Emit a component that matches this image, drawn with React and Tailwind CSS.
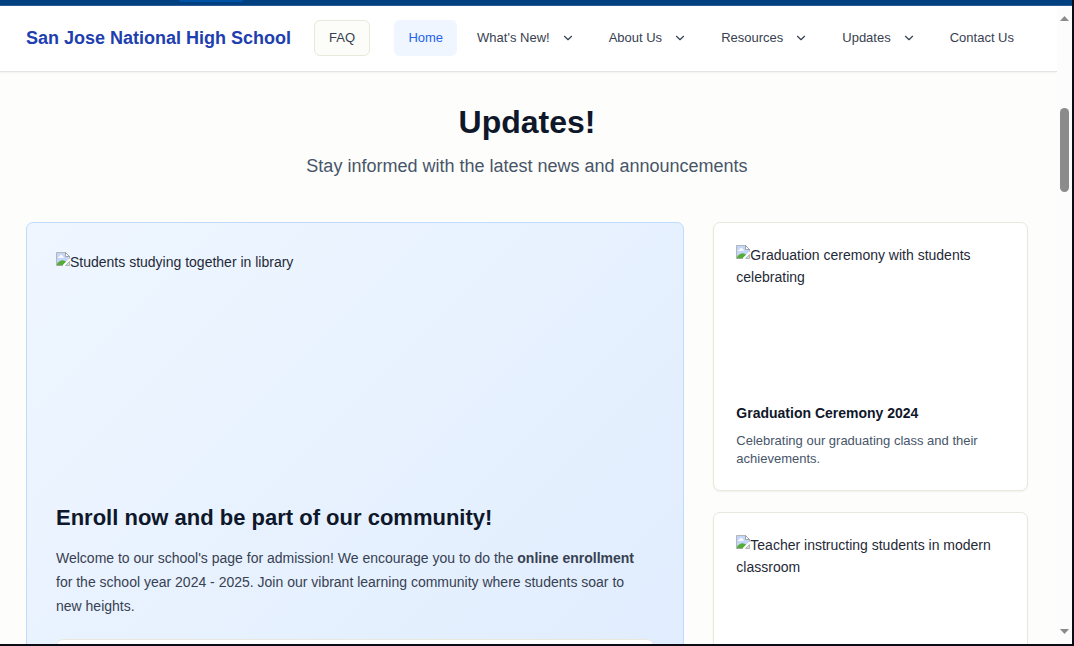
import { ChevronDown } from "lucide-react";

const NAV = [
  { label: "Home", active: true },
  { label: "What's New!", menu: true },
  { label: "About Us", menu: true },
  { label: "Resources", menu: true },
  { label: "Updates", menu: true },
  { label: "Contact Us" },
];

const STORIES = [
  {
    alt: "Graduation ceremony with students celebrating",
    title: "Graduation Ceremony 2024",
    text: "Celebrating our graduating class and their achievements.",
  },
  { alt: "Teacher instructing students in modern classroom" },
];

function MissingPicture() {
  return (
    <svg className="mt-px inline-block h-3.5 w-3.5 align-top" viewBox="0 0 14 14" aria-hidden="true">
      <path d="M.5 .5H9.5L13.5 4.5V7L7 13.5H.5Z" fill="#c3d5f8" />
      <path d="M2 6Q2 4.2 3.6 4.2Q4.4 2.2 6 3.2Q7.8 3.6 7.8 6Z" fill="#f6f9ff" />
      <path d="M1 13V12Q3.5 8.3 6.5 8.3Q8.8 8.3 10.2 9.8L7 13Z" fill="#55ac36" />
      <path d="M.5 13.5V.5H9.5L13.5 4.5V7" fill="none" stroke="#b3b6bb" />
      <path d="M9.5 .5V4.5H13.5Z" fill="#fff" stroke="#8e9299" strokeWidth=".8" />
      <path d="M.5 13.5H7" stroke="#9aa79a" />
      <path d="M13.5 9.5V13.5H9.5Z" fill="#cfe0ca" stroke="#a3a7ad" strokeWidth=".8" />
      <path d="M14 7L7.2 13.8" stroke="#fff" strokeWidth="1.5" />
    </svg>
  );
}

function Picture({ alt, className }) {
  return (
    <div className={className}>
      <MissingPicture />
      {alt}
    </div>
  );
}

function Header() {
  return (
    <header className="flex shrink-0 items-center justify-between border-b border-[#e3e4e6] bg-white pt-3.5 pr-[29px] pb-[15px] pl-[26px] shadow-xs">
      <div className="flex items-center gap-[23px] whitespace-nowrap">
        <a href="#home" className="text-[18px] font-bold text-[#1e40af]">San Jose National High School</a>
        <button type="button" className="h-9 rounded-md border border-[#e8e8dd] bg-[#fcfcf8] px-3.5 text-[13px] text-[#374151]">FAQ</button>
      </div>
      <nav className="flex items-center gap-1.5 whitespace-nowrap text-[13px] text-[#374151]">
        {NAV.map(({ label, active, menu }) =>
          menu ? (
            <button key={label} type="button" className="flex h-9 items-center gap-[11px] rounded-md px-3.5">
              {label}
              <ChevronDown className="h-3.5 w-3.5" aria-hidden="true" />
            </button>
          ) : (
            <a
              key={label}
              href={"#" + label.toLowerCase().replace(" ", "-")}
              className={active ? "flex h-9 items-center rounded-md bg-[#eff6ff] px-3.5 text-[#2563eb]" : "flex h-9 items-center rounded-md px-3.5"}
            >
              {label}
            </a>
          )
        )}
      </nav>
    </header>
  );
}

function ScrollRail() {
  return (
    <div className="flex w-[15px] shrink-0 flex-col items-center bg-[#fcfcfc] pt-2.5 pb-2.5" aria-hidden="true">
      <svg className="h-[5px] w-[9px]" viewBox="0 0 9 5"><path d="M4.5 0L9 5H0Z" fill="#8a8a8a" /></svg>
      <div className="mt-[87px] h-[84px] w-[9px] rounded-full bg-[#8b8b8b]" />
      <svg className="mt-auto h-[5px] w-[9px]" viewBox="0 0 9 5"><path d="M0 0H9L4.5 5Z" fill="#8a8a8a" /></svg>
    </div>
  );
}

export default function App() {
  return (
    <div className="flex h-screen flex-col overflow-hidden border-r-2 border-b-2 border-[#0c0c16] bg-[#fdfdfb] font-['Liberation_Sans',Arial,sans-serif]">
      <div className="h-1.5 shrink-0 border-b border-[#2b5c93] bg-[#004080] pl-[179px]">
        <div className="h-0.5 w-16 rounded-b-sm bg-[#0052a5]" />
      </div>
      <div className="flex min-h-0 grow">
        <div className="flex min-w-0 grow flex-col">
          <Header />
          <main className="min-h-0 grow overflow-hidden pt-[30px] pr-[29px] pl-[26px]">
            <div className="text-center">
              <h1 className="text-[32px] leading-10 font-bold text-[#0f172a]">Updates!</h1>
              <p className="mt-2.5 text-[18px] leading-7 text-[#475569]">Stay informed with the latest news and announcements</p>
            </div>
            <div className="mt-[42px] grid grid-cols-3 gap-[29px]">
              <article className="col-span-2 rounded-[7px] border border-[#bfdbfe] bg-linear-135 from-[#eff6ff] to-[#dbeafe] p-[29px] pt-7">
                <Picture alt="Students studying together in library" className="h-[232px] text-[14px] leading-[22px] text-[#1f2937]" />
                <h2 className="mt-5 text-[22px] leading-[30px] font-bold text-[#0f172a]">Enroll now and be part of our community!</h2>
                <p className="mt-[13px] pr-2 text-[14px] leading-6 text-[#374151]">
                  Welcome to our school's page for admission! We encourage you to do the <strong>online enrollment</strong> for
                  the school year 2024 - 2025. Join our vibrant learning community where students soar to new heights.
                </p>
                <div className="mt-[21px] h-96 rounded-[7px] border border-[#e8e8dd] bg-white" />
              </article>
              <div className="flex flex-col gap-[21px]">
                {STORIES.map((s) => (
                  <article key={s.alt} className="rounded-[7px] border border-[#e8e8dd] bg-white p-[22px] pt-[21px] shadow-xs">
                    <Picture alt={s.alt} className="h-[145px] text-[14px] leading-[22px] text-[#1f2937]" />
                    {s.title && <h3 className="mt-3.5 text-[14px] leading-5 font-bold text-[#0f172a]">{s.title}</h3>}
                    {s.text && <p className="mt-[9px] text-[13px] leading-[18px] text-[#475569]">{s.text}</p>}
                  </article>
                ))}
              </div>
            </div>
          </main>
        </div>
        <ScrollRail />
      </div>
    </div>
  );
}
